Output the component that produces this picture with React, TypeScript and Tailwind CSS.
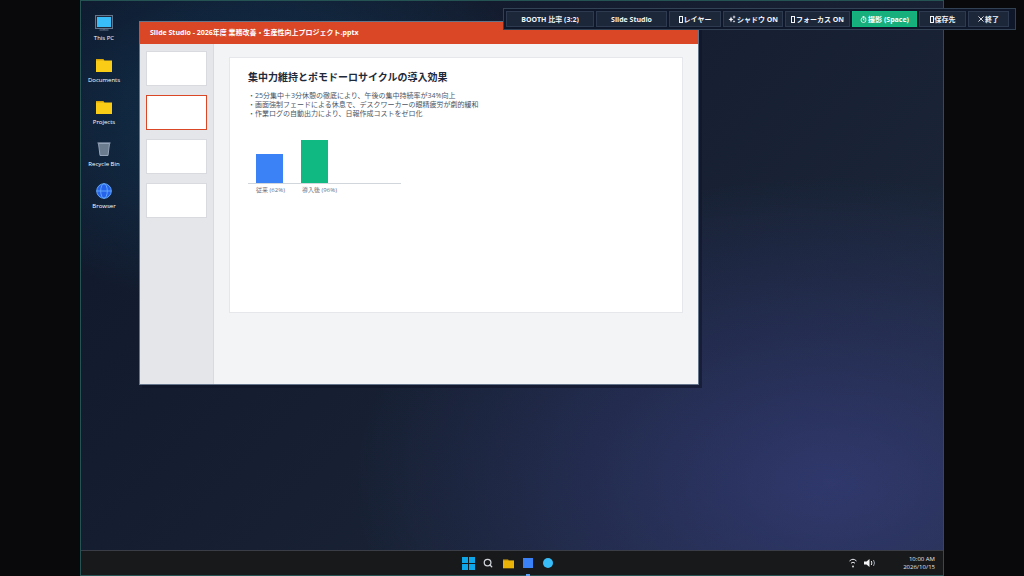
import React from 'react';
import { Search } from 'lucide-react';

const BoxGlyph = () => (
  <svg width="4" height="7" viewBox="0 0 4 7" fill="none" stroke="currentColor" aria-hidden="true">
    <rect x="0.5" y="0.5" width="3" height="6" />
  </svg>
);

const SparkGlyph = () => (
  <svg width="8" height="8" viewBox="0 0 16 16" fill="currentColor" aria-hidden="true">
    <path d="M6 3l1.500 4L11 9l-3.500 1.500L6 15l-1.500-4.500L1 9l3.500-2z" />
    <path d="M12 0l1 3 3 1-3 1-1 3-1-3-2-1 2-1z" />
    <path d="M12 10l.8 2 2 .8-2 .8-.8 2-.8-2-2-.8 2-.8z" />
  </svg>
);

const TimerGlyph = () => (
  <svg width="7" height="7" viewBox="0 0 14 14" fill="none" stroke="currentColor" strokeWidth="1.500" aria-hidden="true">
    <circle cx="7" cy="8" r="5" />
    <path d="M5 1h4M7 1v2M7 5v3h2M11 3l1.500 1.500" />
  </svg>
);

const CrossGlyph = () => (
  <svg width="6" height="6" viewBox="0 0 7 7" fill="none" stroke="currentColor" aria-hidden="true">
    <path d="M0.500 0.500l6 6M6.500 0.500l-6 6" />
  </svg>
);

const MonitorIcon = () => (
  <svg width="18" height="16" viewBox="0 0 18 16" aria-hidden="true">
    <rect x="0.500" y="0.500" width="17" height="13" fill="#1e293b" stroke="#64748b" />
    <rect x="2" y="2" width="14" height="10" fill="#38bdf8" />
    <path d="M9 13v2M4.500 15h9" stroke="#64748b" />
  </svg>
);

const FolderIcon = ({ size = 16, color = '#facc15' }: { size?: number; color?: string }) => (
  <svg width={size} height={size} viewBox="0 0 16 16" aria-hidden="true">
    <path d="M0 4V2h7.500l1 2H0z" fill="#d9a70c" />
    <path d="M0 3.500h16V15H0z" fill={color} />
  </svg>
);

const BinIcon = () => (
  <svg width="14" height="16" viewBox="0 0 14 16" aria-hidden="true">
    <path d="M1.500 2.500h11L11 14.500H3z" fill="#6b7c8f" stroke="#94a3b8" />
    <path d="M0.500 2h13" stroke="#94a3b8" strokeWidth="1.200" />
  </svg>
);

const GlobeIcon = () => (
  <svg width="16" height="16" viewBox="0 0 16 16" fill="none" stroke="#60a5fa" aria-hidden="true">
    <circle cx="8" cy="8" r="7.300" fill="#2563eb" />
    <ellipse cx="8" cy="8" rx="3.300" ry="7.300" />
    <path d="M0.700 8h14.600" />
  </svg>
);

const StartIcon = () => (
  <svg width="13" height="13" viewBox="0 0 13 13" fill="#0ea5e9" aria-hidden="true">
    <path d="M0 0h6v6H0zM7 0h6v6H7zM0 7h6v6H0zM7 7h6v6H7z" />
  </svg>
);

const WifiIcon = () => (
  <svg width="10" height="10" viewBox="0 0 10 10" fill="none" stroke="#e5e7eb" aria-hidden="true">
    <path d="M1.500 3Q5-0.500 8.500 3M3 5.200Q5 3.200 7 5.200" />
    <circle cx="5" cy="8.500" r="0.900" fill="#e5e7eb" stroke="none" />
  </svg>
);

const VolumeIcon = () => (
  <svg width="12" height="8" viewBox="0 0 12 8" fill="none" aria-hidden="true">
    <path d="M0 2.500h2.500L5.500 0v8L2.500 5.500H0z" fill="#f3f4f6" />
    <path d="M7.300 2q1.200 2 0 4" stroke="#e5e7eb" />
    <path d="M9.500 1q2 3 0 6" stroke="#9ca3af" />
  </svg>
);

const shortcuts = [
  { label: 'This PC', icon: <MonitorIcon /> },
  { label: 'Documents', icon: <FolderIcon /> },
  { label: 'Projects', icon: <FolderIcon /> },
  { label: 'Recycle Bin', icon: <BinIcon /> },
  { label: 'Browser', icon: <GlobeIcon /> },
];

const tools = [
  { label: 'BOOTH 比率 (3:2)', icon: null, style: 'w-[88px]' },
  { label: 'Slide Studio', icon: null, style: 'w-[71px]' },
  { label: 'レイヤー', icon: <BoxGlyph />, style: 'w-[52px]' },
  { label: 'シャドウ ON', icon: <SparkGlyph />, style: 'w-[60px]' },
  { label: 'フォーカス ON', icon: <BoxGlyph />, style: 'w-[65px]' },
  { label: '撮影 (Space)', icon: <TimerGlyph />, style: 'w-[65px]', active: true },
  { label: '保存先', icon: <BoxGlyph />, style: 'w-[47px]' },
  { label: '終了', icon: <CrossGlyph />, style: 'w-[41px]' },
];

const bars = [
  { label: '従来', value: 62, height: 29, color: 'bg-[#3b82f6]' },
  { label: '導入後', value: 96, height: 43, color: 'bg-[#10b981]' },
];

const notes = [
  '・25分集中＋3分休憩の徹底により、午後の集中持続率が34%向上',
  '・画面強制フェードによる休息で、デスクワーカーの眼精疲労が劇的緩和',
  '・作業ログの自動出力により、日報作成コストをゼロ化',
];

const Toolbar = () => (
  <div className="absolute right-2 top-2 flex gap-0.5 border border-[#334155] bg-[#0f172a] py-0.5 pl-0.5 pr-1.5">
    {tools.map((tool) => (
      <button
        key={tool.label}
        type="button"
        className={`flex h-4 items-center justify-center gap-px whitespace-nowrap border text-[7px] leading-none font-bold ${
          tool.active
            ? 'border-[#10b981] bg-[#17b07c] text-white'
            : 'border-[#2d3a4f] bg-[#1c273a] text-gray-100'
        } ${tool.style}`}
      >
        {tool.icon}
        {tool.label}
      </button>
    ))}
  </div>
);

const SlideWindow = () => (
  <section className="absolute left-[58px] top-5 flex h-[364px] w-[65%] flex-col border border-[#64748b] bg-gray-100 shadow-[3px_3px_0_rgba(15,20,40,0.6)]">
    <header className="flex h-[22px] shrink-0 items-center bg-[#d94727] px-2.5 text-[7px] font-bold text-white">
      Slide Studio - 2026年度 業務改善・生産性向上プロジェクト.pptx
    </header>
    <div className="flex flex-1">
      <nav className="flex w-[74px] shrink-0 flex-col gap-[9px] border-r border-[#d8dadf] bg-[#e5e6ea] px-1.5 py-[7px]">
        {[1, 2, 3, 4].map((n) => (
          <button
            key={n}
            type="button"
            aria-label={`Slide ${n}`}
            className={`h-[35px] w-full border bg-white ${n === 2 ? 'border-[#d94727]' : 'border-[#d8dadf]'}`}
          />
        ))}
      </nav>
      <div className="flex-1 px-[15px] py-[13px]">
        <article className="aspect-video w-full border border-gray-200 bg-white px-[18px] py-[11px]">
          <h1 className="text-[10px] leading-4 font-bold text-gray-800">
            集中力維持とポモドーロサイクルの導入効果
          </h1>
          <div className="mt-1.5 text-[7px] leading-[9px] text-gray-600">
            {notes.map((note) => (
              <p key={note}>{note}</p>
            ))}
          </div>
          <div className="mt-[21px] flex h-[45px] w-[153px] items-end gap-[18px] border-b border-gray-300 px-2">
            {bars.map((bar) => (
              <div key={bar.label} className={`w-[27px] ${bar.color}`} style={{ height: bar.height }} />
            ))}
          </div>
          <div className="flex gap-2.5 px-2 pt-px text-[6px] leading-[10px] text-gray-500">
            {bars.map((bar) => (
              <span key={bar.label} className="w-9 whitespace-nowrap">
                {bar.label} ({bar.value}%)
              </span>
            ))}
          </div>
        </article>
      </div>
    </div>
  </section>
);

const Taskbar = () => (
  <footer className="grid h-[25px] shrink-0 grid-cols-3 items-center border-t border-[#3a3d45] bg-[#18191b] px-2">
    <div />
    <div className="flex h-full items-center justify-center pr-2">
      <button type="button" aria-label="Start" className="flex w-5 justify-center"><StartIcon /></button>
      <button type="button" aria-label="Search" className="flex w-5 justify-center"><Search size={10} strokeWidth={3} color="#d1d5db" /></button>
      <button type="button" aria-label="Files" className="flex w-5 justify-center"><FolderIcon size={11} color="#eab308" /></button>
      <button type="button" aria-label="Slide Studio" className="relative flex w-5 justify-center">
        <span className="h-2.5 w-2.5 bg-[#3b82f6]" />
        <span className="absolute -bottom-2 left-1/2 h-0.5 w-1 -translate-x-1/2 bg-[#60a5fa]" />
      </button>
      <button type="button" aria-label="Browser" className="flex w-5 justify-center">
        <span className="h-2.5 w-2.5 rounded-full bg-[#38bdf8]" />
      </button>
    </div>
    <div className="flex items-center justify-end text-gray-200">
      <WifiIcon />
      <span className="ml-1.5"><VolumeIcon /></span>
      <div className="w-[59px] text-right text-[6px] leading-2">
        <div>10:00 AM</div>
        <div>2026/10/15</div>
      </div>
    </div>
  </footer>
);

const App: React.FC = () => {
  return (
    <div className="relative flex h-screen justify-center overflow-hidden bg-[#09090b] font-['Open_Sans','Noto_Sans_CJK_JP',sans-serif]">
      <main className="relative flex aspect-[3/2] h-full flex-col border border-[#255252] bg-[radial-gradient(ellipse_at_87%_84%,rgba(99,102,241,0.28),transparent_45%),radial-gradient(ellipse_at_20%_20%,rgba(14,165,233,0.18),transparent_30%),linear-gradient(135deg,#0f172a,#1e293b)]">
        <div className="flex flex-1 flex-col items-start gap-3.5 pl-0.5 pt-3.5">
          {shortcuts.map((item) => (
            <button
              key={item.label}
              type="button"
              className="flex w-[42px] flex-col items-center gap-0.5 whitespace-nowrap text-[6px] leading-[10px] text-white"
            >
              {item.icon}
              {item.label}
            </button>
          ))}
        </div>
        <SlideWindow />
        <Taskbar />
      </main>
      <Toolbar />
    </div>
  );
};

export default App;
